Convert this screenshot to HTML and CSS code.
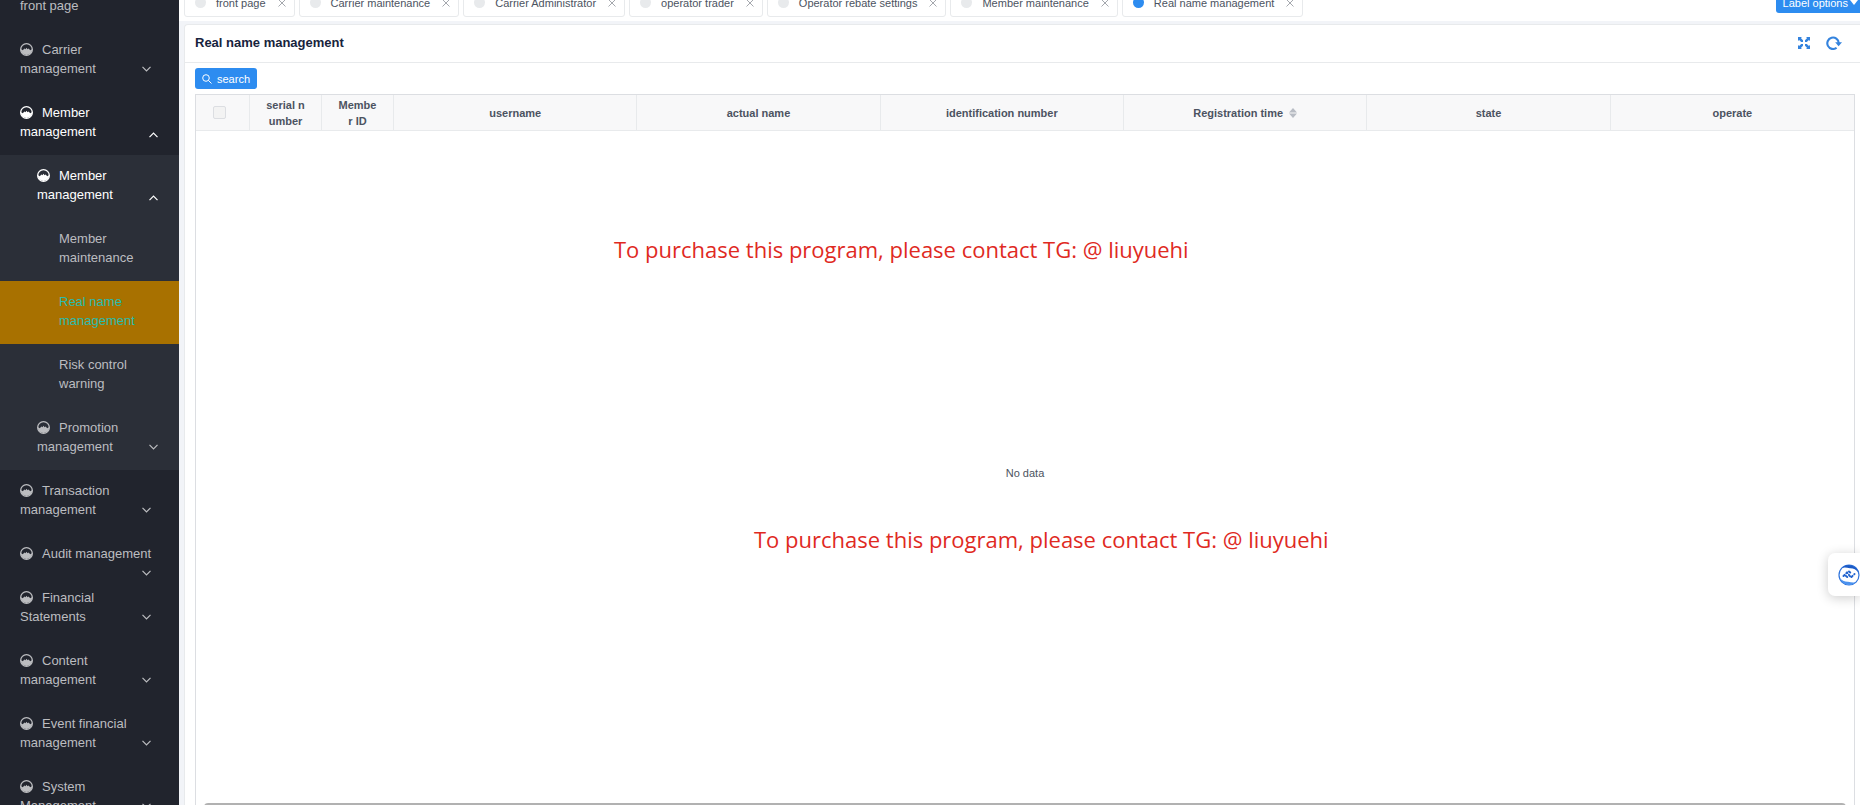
FILE: index.html
```html
<!DOCTYPE html>
<html lang="en">
<head>
<meta charset="utf-8">
<title>Real name management</title>
<link rel="stylesheet" href="styles.css">
</head>
<body>
<svg class="sprite" aria-hidden="true">
  <symbol id="gauge" viewBox="0 0 12 12">
    <circle cx="6" cy="6" r="5.4" fill="none" stroke="currentColor" stroke-width="1.2"/>
    <path d="M.6 5.6 2.6 6.6 4 5 5 5.7 6 4.4 7 5.7 8 5 9.4 6.6 11.4 5.6A5.4 5.4 0 0 1 .6 5.6Z" fill="currentColor"/>
  </symbol>
  <symbol id="down" viewBox="0 0 9 6"><path d="M.5.8 4.5 4.8 8.5.8" fill="none" stroke="currentColor" stroke-width="1.2"/></symbol>
  <symbol id="up" viewBox="0 0 9 6"><path d="M.5 5.2 4.5 1.2 8.5 5.2" fill="none" stroke="currentColor" stroke-width="1.2"/></symbol>
  <symbol id="close" viewBox="0 0 8 8"><path d="M.5.5 7.5 7.5M7.5.5.5 7.5" fill="none" stroke="currentColor" stroke-width="1"/></symbol>
</svg>
<div class="app">
  <nav class="sidebar" aria-label="Main">
    <a class="item item-first" href="#">front page</a>
    <a class="item" href="#"><svg class="gauge"><use href="#gauge"/></svg>Carrier management<svg class="chevron"><use href="#down"/></svg></a>
    <a class="item open" href="#"><svg class="gauge"><use href="#gauge"/></svg>Member management<svg class="chevron"><use href="#up"/></svg></a>
    <div class="submenu">
      <a class="item level2 open" href="#"><svg class="gauge"><use href="#gauge"/></svg>Member management<svg class="chevron"><use href="#up"/></svg></a>
      <a class="item level3" href="#">Member maintenance</a>
      <a class="item level3 active" href="#">Real name management</a>
      <a class="item level3" href="#">Risk control warning</a>
      <a class="item level2" href="#"><svg class="gauge"><use href="#gauge"/></svg>Promotion management<svg class="chevron"><use href="#down"/></svg></a>
    </div>
    <a class="item" href="#"><svg class="gauge"><use href="#gauge"/></svg>Transaction management<svg class="chevron"><use href="#down"/></svg></a>
    <a class="item" href="#"><svg class="gauge"><use href="#gauge"/></svg>Audit management<svg class="chevron"><use href="#down"/></svg></a>
    <a class="item" href="#"><svg class="gauge"><use href="#gauge"/></svg>Financial Statements<svg class="chevron"><use href="#down"/></svg></a>
    <a class="item" href="#"><svg class="gauge"><use href="#gauge"/></svg>Content management<svg class="chevron"><use href="#down"/></svg></a>
    <a class="item" href="#"><svg class="gauge"><use href="#gauge"/></svg>Event financial management<svg class="chevron"><use href="#down"/></svg></a>
    <a class="item" href="#"><svg class="gauge"><use href="#gauge"/></svg>System Management<svg class="chevron"><use href="#down"/></svg></a>
  </nav>
  <main class="main">
    <header class="tabbar">
      <div class="tabs">
        <div class="tab"><i class="dot"></i><a href="#">front page</a><button class="close" aria-label="Close front page"><svg><use href="#close"/></svg></button></div>
        <div class="tab"><i class="dot"></i><a href="#">Carrier maintenance</a><button class="close" aria-label="Close Carrier maintenance"><svg><use href="#close"/></svg></button></div>
        <div class="tab"><i class="dot"></i><a href="#">Carrier Administrator</a><button class="close" aria-label="Close Carrier Administrator"><svg><use href="#close"/></svg></button></div>
        <div class="tab"><i class="dot"></i><a href="#">operator trader</a><button class="close" aria-label="Close operator trader"><svg><use href="#close"/></svg></button></div>
        <div class="tab"><i class="dot"></i><a href="#">Operator rebate settings</a><button class="close" aria-label="Close Operator rebate settings"><svg><use href="#close"/></svg></button></div>
        <div class="tab"><i class="dot"></i><a href="#">Member maintenance</a><button class="close" aria-label="Close Member maintenance"><svg><use href="#close"/></svg></button></div>
        <div class="tab"><i class="dot current"></i><a href="#">Real name management</a><button class="close" aria-label="Close Real name management"><svg><use href="#close"/></svg></button></div>
      </div>
      <button class="button label-options">Label options<svg class="caret" viewBox="0 0 8 5"><path d="M0 0H8L4 5Z" fill="currentColor"/></svg></button>
    </header>
    <section class="card">
      <div class="card-head">
        <h1>Real name management</h1>
        <div class="tools">
          <button class="tool" aria-label="Full screen">
            <svg class="expand" viewBox="0 0 12 12"><path d="M0 0H4L2.9 1.1 5 3.2V5H3.2L1.1 2.9 0 4ZM12 0V4L10.9 2.9 8.8 5H7V3.2L9.1 1.1 8 0ZM0 12V8L1.1 9.1 3.2 7H5V8.8L2.9 10.9 4 12ZM12 12H8L9.1 10.9 7 8.8V7H8.8L10.9 9.1 12 8Z" fill="currentColor"/></svg>
          </button>
          <button class="tool" aria-label="Refresh">
            <svg class="refresh" viewBox="0 0 16 14"><path d="M10.6 11.7A5.7 5.7 0 1 1 12.7 7" fill="none" stroke="currentColor" stroke-width="2.1"/><path d="M9.2 6.2H16L12.6 10.2Z" fill="currentColor"/></svg>
          </button>
        </div>
      </div>
      <div class="card-body">
        <button class="button search"><svg viewBox="0 0 10 10"><circle cx="4" cy="4" r="3.3" fill="none" stroke="currentColor"/><path d="M6.4 6.4 9.5 9.5" stroke="currentColor"/></svg>search</button>
        <div class="table-wrap">
          <table>
            <colgroup><col class="c-check"><col class="c-narrow"><col class="c-narrow"><col><col><col><col><col><col></colgroup>
            <thead>
              <tr>
                <th class="check"><input type="checkbox" disabled aria-label="Select all"></th>
                <th>serial n<br>umber</th>
                <th>Membe<br>r ID</th>
                <th>username</th>
                <th>actual name</th>
                <th>identification number</th>
                <th>Registration time<svg class="sort" viewBox="0 0 8 10"><path d="M0 4.4 4 0 8 4.4ZM0 5.6H8L4 10Z" fill="currentColor"/></svg></th>
                <th>state</th>
                <th>operate</th>
              </tr>
            </thead>
            <tbody><tr><td colspan="9">No data</td></tr></tbody>
          </table>
          <div class="scrollbar"></div>
          <p class="notice notice-one">To purchase this program, please contact TG: @ liuyuehi</p>
          <p class="notice notice-two">To purchase this program, please contact TG: @ liuyuehi</p>
        </div>
      </div>
    </section>
  </main>
  <button class="floating" aria-label="Assistant">
    <svg viewBox="0 0 22 22"><circle cx="11" cy="11" r="10" fill="#fff" stroke="#2f74dc" stroke-width="1.2"/><path d="M4 3.8A10 10 0 0 1 20.5 8.5Q17 4 12 4.2 7 2.8 4 3.8Z" fill="#1c5bc7"/><path d="M18 18.2A10 10 0 0 1 1.5 13.5Q5 18 10 17.8 15 19.2 18 18.2Z" fill="#4b92ee"/><path d="M5.5 12 9 8.5 13 13.5 16.5 10M11 7.5 14 10M8 12 11 14.5" fill="none" stroke="#2566cf" stroke-width="2" stroke-linecap="round" stroke-dasharray="1.6 2.4"/></svg>
  </button>
</div>
</body>
</html>
```
FILE: styles.css
```css
* { box-sizing: border-box; }
body {
  margin: 0;
  font: 11px/16px "Liberation Sans", Arial, sans-serif;
  color: #4c5361;
  background: #f2f4f8;
}
button { font: inherit; border: 0; padding: 0; background: none; color: inherit; cursor: pointer; }
a { color: inherit; text-decoration: none; }
.sprite { position: absolute; width: 0; height: 0; }
.app { display: flex; height: 100vh; overflow: hidden; }

.sidebar {
  flex: 0 0 179px;
  background: #21242d;
  color: #bcbdc0;
  font-size: 13px;
  line-height: 19px;
  overflow: hidden;
}
.item { display: block; padding: 11px 20px 14px; }
.item-first { padding-top: 0; margin-top: -4px; }
.submenu { background: #2b2f38; }
.level2 { padding-left: 37px; }
.level3 { padding-left: 59px; }
.open { color: #fff; }
.active { background: #a87100; color: #2abcae; }
.gauge { width: 13px; height: 13px; margin-right: 9px; vertical-align: -2px; }
.chevron { float: right; width: 9px; height: 6px; margin: 7px 8px 0 0; }
.level2 .chevron { margin-right: 1px; }
.open .chevron { margin: 10px 1px 0 0; }

.main { flex: 1; min-width: 0; display: flex; flex-direction: column; }
.tabbar {
  display: flex;
  justify-content: space-between;
  align-items: flex-end;
  height: 21px;
  padding-left: 5px;
  background: #fff;
}
.tabs { display: flex; gap: 4px; padding-bottom: 4px; }
.tab {
  display: flex;
  align-items: center;
  height: 29px;
  padding: 0 8px 0 10px;
  border: 1px solid #e8eaec;
  border-radius: 3px;
  white-space: nowrap;
}
.dot { width: 11px; height: 11px; margin-right: 10px; border-radius: 50%; background: #e8eaec; }
.dot.current { background: #2d8cf0; }
.close { display: flex; margin-left: 12px; color: #a5a8ae; }
.close svg { width: 8px; height: 8px; }
.button { display: flex; align-items: center; background: #2d8cf0; color: #fff; border-radius: 3px; }
.label-options { height: 21px; margin-bottom: 8px; padding: 0 2px 0 7px; border-radius: 3px 0 0 3px; }
.caret { width: 8px; height: 5px; margin-left: 2px; }

.card {
  flex: 1;
  display: flex;
  flex-direction: column;
  min-height: 0;
  margin: 3px 0 0 5px;
  border: solid #e8eaec;
  border-width: 1px 0 0 1px;
  border-radius: 4px 0 0 0;
  background: #fff;
}
.card-head {
  display: flex;
  justify-content: space-between;
  align-items: center;
  height: 38px;
  padding: 0 18px 2px 10px;
  border-bottom: 1px solid #e8eaec;
}
h1 { margin: 0; font-size: 13px; line-height: 19px; color: #17233d; }
.tools { display: flex; align-items: center; gap: 16px; color: #3483de; }
.tool { display: flex; }
.expand { width: 12px; height: 12px; }
.refresh { width: 16px; height: 14px; }
.card-body {
  flex: 1;
  display: flex;
  flex-direction: column;
  align-items: flex-start;
  gap: 5px;
  min-height: 0;
  padding: 5px 5px 0 10px;
}
.search { flex: none; height: 21px; gap: 5px; padding: 0 7px; }
.search svg { width: 10px; height: 10px; }

.table-wrap {
  position: relative;
  flex: 1;
  align-self: stretch;
  margin-bottom: -10px;
  border: 1px solid #dcdee2;
}
table { width: 100%; height: 100%; table-layout: fixed; border-collapse: separate; border-spacing: 0; text-align: center; }
.c-check { width: 54px; }
.c-narrow { width: 72px; }
th {
  height: 36px;
  padding: 1px 0;
  background: #f8f8f9;
  border: solid #e8eaec;
  border-width: 0 1px 1px 0;
}
th:last-child { border-right: 0; }
.check { padding-right: 6px; }
td { padding: 0; }
input[type="checkbox"] {
  appearance: none;
  display: block;
  width: 13px;
  height: 13px;
  margin: 0 auto;
  border: 1px solid #dcdee2;
  border-radius: 2px;
  background: #f3f3f3;
}
.sort { width: 8px; height: 10px; margin-left: 6px; vertical-align: -1px; color: #b8bcc4; }
.scrollbar {
  position: absolute;
  left: 8px;
  right: 8px;
  bottom: 2px;
  height: 9px;
  border-radius: 4px;
  background: #b1b1b1;
}
.notice {
  position: absolute;
  margin: 0;
  font: 22px/32px "Open Sans", "Noto Sans", sans-serif;
  color: #e02a1f;
  white-space: nowrap;
}
.notice-one { left: 418px; top: 138px; }
.notice-two { left: 558px; top: 428px; }

.floating {
  position: absolute;
  right: 0;
  top: 553px;
  display: flex;
  align-items: center;
  width: 32px;
  height: 43px;
  padding-left: 10px;
  border-radius: 7px 0 0 7px;
  background: #fff;
  box-shadow: 0 2px 12px rgba(0, 0, 0, .2);
  overflow: hidden;
}
.floating svg { flex: none; width: 22px; height: 22px; }
```
